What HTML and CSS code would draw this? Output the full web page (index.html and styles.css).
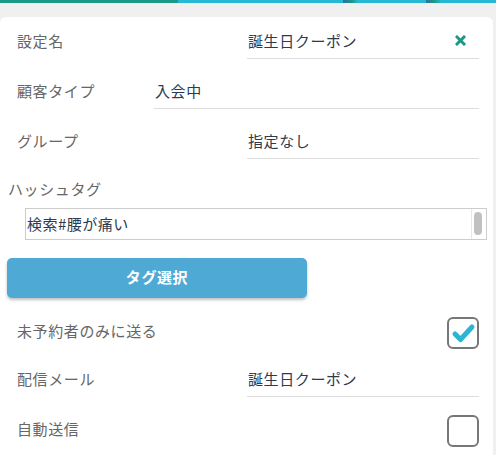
FILE: index.html
```html
<!DOCTYPE html>
<html>
  <head>
    <title>設定</title>
    <link rel="stylesheet" href="styles.css">
  </head>
  <body>
    <div class="topbar"></div>

    <div class="card">
      <div class="row">
        <div class="label wide">設定名</div>
        <div class="field">
          <span>誕生日クーポン</span>
          <svg class="clear" width="11" height="11" viewBox="0 0 11 11">
            <path d="M2 2 L9 9 M9 2 L2 9" stroke="#1a9a86" stroke-width="3" stroke-linecap="square" />
          </svg>
        </div>
      </div>

      <div class="row">
        <div class="label narrow">顧客タイプ</div>
        <div class="field">入会中</div>
      </div>

      <div class="row">
        <div class="label wide">グループ</div>
        <div class="field">指定なし</div>
      </div>

      <div class="tag_label">ハッシュタグ</div>
      <div class="tag_box">
        <div class="tag_text">検索#腰が痛い</div>
        <div class="scroll"><div class="thumb"></div></div>
      </div>

      <button class="button">タグ選択</button>

      <div class="row check_row first_check">
        <div class="label">未予約者のみに送る</div>
        <div class="checkbox">
          <svg width="28" height="28" viewBox="0 0 28 28">
            <path d="M6 15 L11.5 20.5 L23 8" fill="none" stroke="#2bb5d5" stroke-width="5" stroke-linecap="round" stroke-linejoin="round" />
          </svg>
        </div>
      </div>

      <div class="row mail_row">
        <div class="label wide">配信メール</div>
        <div class="field">誕生日クーポン</div>
      </div>

      <div class="row check_row last_row">
        <div class="label">自動送信</div>
        <div class="checkbox"></div>
      </div>
    </div>
  </body>
</html>
```

FILE: styles.css
```css
* {
  padding: 0;
  margin: 0;
  box-sizing: border-box;
  font-family: "Noto Sans CJK JP", "Noto Sans", sans-serif;
}

body {
  background: #f0f0f0;
}

.topbar {
  height: 3px;
  background: linear-gradient(to right,
    #1a9a86 0, #1a9a86 178px,
    #26b8d4 178px, #26b8d4 343px,
    #2f6fa3 343px, #1a9a86 352px, #26b8d4 358px,
    #26b8d4 426px,
    #2f6fa3 426px, #1a9a86 434px, #26b8d4 441px,
    #26b8d4 100%);
}

.card {
  background: #fff;
  margin: 14px 3px 0 0;
  padding: 8px 6px 7px 8px;
  border-radius: 6px 6px 0 0;
}

.row {
  display: flex;
  align-items: center;
  height: 34px;
  margin: 0 8px 16px 9px;
}

.label {
  font-size: 15px;
  letter-spacing: 0.6px;
  color: #666;
  flex: 1;
  margin-top: -3px;
}

.label.wide {
  flex: 0 0 230px;
}

.label.narrow {
  flex: 0 0 137px;
}

.field {
  flex: 1;
  height: 34px;
  display: flex;
  align-items: center;
  justify-content: space-between;
  padding: 0 13px 2px 1px;
  border-bottom: 1px solid #ddd;
  font-size: 15px;
  letter-spacing: 0.6px;
  color: #2e3a4e;
}

.tag_label {
  height: 30px;
  line-height: 28px;
  font-size: 15px;
  letter-spacing: 0.6px;
  color: #666;
}

.tag_box {
  display: flex;
  height: 32px;
  margin: 3px 0 0 17px;
  border: 1px solid #ccc;
}

.tag_text {
  flex: 1;
  padding-left: 1px;
  line-height: 29px;
  font-size: 15px;
  letter-spacing: 0.5px;
  color: #2e3a4e;
}

.scroll {
  width: 15px;
  border-left: 1px solid #e8e8e8;
  padding: 3px 0 0 2px;
}

.thumb {
  width: 8px;
  height: 23px;
  border-radius: 4px;
  background: #c1c1c1;
}

.button {
  display: block;
  width: 300px;
  height: 40px;
  margin: 18px 0 0 -1px;
  border: none;
  border-radius: 5px;
  background: #4eaad4;
  box-shadow: 0 2px 3px rgba(0, 0, 0, 0.25);
  color: #fff;
  font-size: 15px;
  font-weight: 700;
  letter-spacing: 0.6px;
  padding-bottom: 4px;
}

.check_row .label {
  margin-top: -5px;
}

.first_check {
  margin-top: 18px;
  margin-bottom: 13px;
}

.mail_row {
  margin-bottom: 17px;
}

.last_row {
  margin-bottom: 0;
}

.checkbox {
  width: 32px;
  height: 32px;
  border: 2px solid #777;
  border-radius: 6px;
  display: flex;
  align-items: center;
  justify-content: center;
}
```
